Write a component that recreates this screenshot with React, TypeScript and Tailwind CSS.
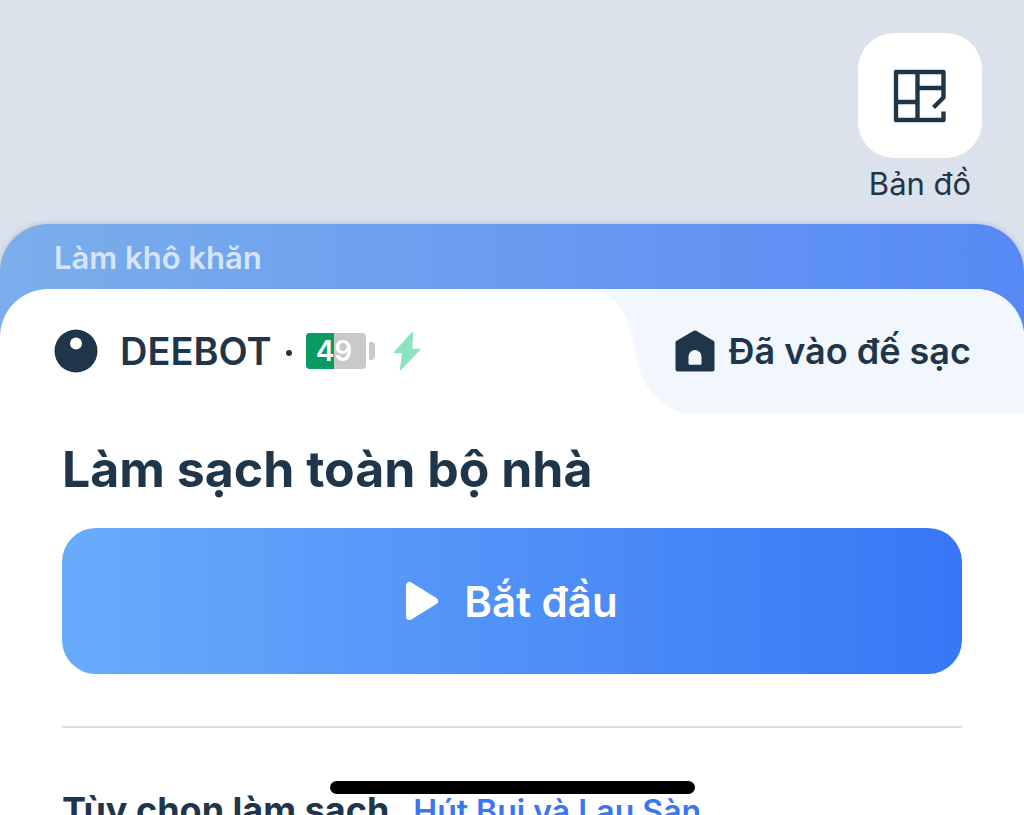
function MapIcon() {
  return (
    <svg viewBox="0 0 54 54" className="size-[54px]" fill="none" stroke="#1f364a" strokeWidth="4.400" aria-hidden="true">
      <path strokeLinejoin="round" d="M50.500 42.500v8.500H3V3h47.500v25.500L40.500 38.500" />
      <path d="M24.500 3v48M3 33h21.500M24.500 19H50.500" />
    </svg>
  );
}

function RobotIcon() {
  return (
    <svg viewBox="0 0 44 44" className="size-11" aria-hidden="true">
      <circle cx="22" cy="22" r="21.500" fill="#1f364a" />
      <circle cx="22" cy="14.500" r="6" fill="#fff" />
    </svg>
  );
}

function BoltIcon() {
  return (
    <svg viewBox="0 0 28 40" className="h-10 w-7" fill="#8be3c0" stroke="#8be3c0" strokeWidth="1.500" strokeLinejoin="round" aria-hidden="true">
      <path d="M19.500 1.500 1.500 21.500H10L7.500 38.500 26.500 18.500H18.500z" />
    </svg>
  );
}

function DockIcon() {
  return (
    <svg viewBox="0 0 40 42" className="h-[42px] w-10" aria-hidden="true">
      <path
        fill="#1f364a"
        fillRule="evenodd"
        d="M18.800.8a2.400 2.400 0 0 1 2.400 0l17.200 9.900A2.200 2.200 0 0 1 39.500 12.700V39.500a2 2 0 0 1-2 2H2.500A2 2 0 0 1 .5 39.500V12.700a2.200 2.200 0 0 1 1.100-2zM13.500 33.500a1.300 1.300 0 0 0 1.300 1.300H25.200a1.300 1.300 0 0 0 1.300-1.300V26.500a6.500 6.500 0 0 0-13 0z"
      />
    </svg>
  );
}

function PlayIcon() {
  return (
    <svg viewBox="0 0 32 40" className="h-10 w-8" fill="#fff" stroke="#fff" strokeWidth="7" strokeLinejoin="round" aria-hidden="true">
      <path d="M3.500 4.500v31L28.500 20z" />
    </svg>
  );
}

function Battery({ level }: { level: number }) {
  return (
    <div className="flex items-center gap-[3px]" role="img" aria-label={`${level}%`}>
      <div className="relative flex h-9 w-[60px] items-center overflow-hidden rounded-[4px] bg-[#c9c9c9] pl-2.5">
        <div className="absolute inset-y-0 left-0 bg-[#089c63]" style={{ width: `${level - 2}%` }} />
        <span className="relative text-[28px] leading-9 font-semibold text-white">{level}</span>
      </div>
      <div className="h-[18px] w-1.5 rounded-r-[4px] rounded-l-[1px] bg-[#c9c9c9]" />
    </div>
  );
}

function DockStatus() {
  return (
    <div className="relative flex h-full items-center pr-[53px] pl-[86px]">
      <div className="absolute inset-0 flex">
        <svg viewBox="0 0 96 124" className="h-full w-24" aria-hidden="true">
          <path fill="#f2f7fe" d="M0 0C22 3 36 18 41 40L50 78C55 100 70 114 92 124H96V0z" />
        </svg>
        <div className="flex-1 bg-[#f2f7fe]" />
      </div>
      <div className="relative flex items-center gap-3.5">
        <DockIcon />
        <span className="text-[36px] leading-11 font-semibold">Đã vào đế sạc</span>
      </div>
    </div>
  );
}

export default function App() {
  return (
    <div className="flex h-screen flex-col overflow-hidden bg-[#dce2ec] font-['Inter','Noto_Sans',sans-serif] text-[#1f364a]">
      <header className="flex justify-end px-[42px] pt-[33px] pb-5">
        <button type="button" className="flex flex-col items-center gap-1.5">
          <span className="flex h-[125px] w-[124px] items-center justify-center rounded-[36px] bg-white">
            <MapIcon />
          </span>
          <span className="text-[31px] leading-10 whitespace-nowrap">Bản đồ</span>
        </button>
      </header>

      <main className="flex flex-1 flex-col rounded-t-[48px] bg-linear-to-r from-[#7baeea] to-[#5789f5] shadow-[0_0_6px_rgba(60,80,120,0.25)]">
        <p className="px-[54px] pt-3.5 pb-[11px] text-[31px] leading-10 font-semibold text-[#d6e5fb]">Làm khô khăn</p>

        <section className="flex-1 overflow-hidden rounded-t-[48px] bg-white">
          <div className="flex h-[124px] items-center justify-between">
            <div className="flex items-center pl-[54px]">
              <RobotIcon />
              <h1 className="ml-[22px] text-[38px] leading-11 font-semibold">DEEBOT</h1>
              <span className="mx-3.5 mt-1 size-1.5 rounded-full bg-[#1f364a]" />
              <Battery level={49} />
              <span className="ml-[18px]">
                <BoltIcon />
              </span>
            </div>
            <DockStatus />
          </div>

          <div className="px-[62px]">
            <h2 className="pt-[22px] pb-[25px] text-[50px] leading-[68px] font-bold">Làm sạch toàn bộ nhà</h2>
            <button
              type="button"
              className="flex h-[146px] w-full items-center justify-center gap-[26px] rounded-[34px] bg-linear-to-r from-[#69abfb] via-[#5091f8] to-[#3776f5] text-[42px] font-semibold text-white"
            >
              <PlayIcon />
              <span>Bắt đầu</span>
            </button>
            <hr className="mt-[52px] border-t-2 border-[#d5dfe8]" />
            <div className="flex items-baseline gap-6 pt-[60px] whitespace-nowrap">
              <h3 className="text-[36px] leading-11 font-bold">Tùy chọn làm sạch</h3>
              <a href="#mode" className="text-[32px] leading-11 font-semibold text-[#3b76f0]">Hút Bụi và Lau Sàn</a>
            </div>
          </div>
        </section>
      </main>

      <div className="fixed inset-x-0 bottom-[21px] mx-auto h-[13px] w-[365px] rounded-full bg-black" />
    </div>
  );
}
